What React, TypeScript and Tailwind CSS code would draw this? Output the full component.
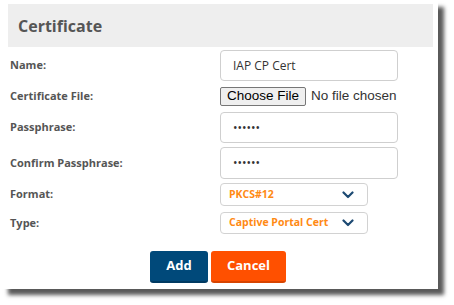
import React from "react";

const label = "w-[210px] shrink-0 text-[11px] font-bold text-[#555]";

function Chevron() {
  return (
    <svg width="12" height="8" viewBox="0 0 12 8" className="shrink-0">
      <path d="M1.5 1.5 L6 6 L10.5 1.5" fill="none" stroke="#1d4a73" strokeWidth="2.2" strokeLinecap="round" strokeLinejoin="round" />
    </svg>
  );
}

function TextField({ value }: { value: string }) {
  return (
    <div className="flex h-full w-[178px] items-center rounded border border-[#cfcfcf] bg-white pl-3 text-[12px] text-[#333]">
      {value}
    </div>
  );
}

function SelectField({ value }: { value: string }) {
  return (
    <div className="flex h-full w-[148px] items-center rounded border border-[#d2d2d2] bg-white pl-2 pr-[13px] text-[10.5px] font-bold text-[#ff8a14]">
      <span>{value}</span>
      <span className="ml-auto">
        <Chevron />
      </span>
    </div>
  );
}

export default function App() {
  return (
    <div className="h-[305px] w-[454px] bg-white pl-[2px] pt-[1px] font-['Open_Sans',sans-serif]">
      <div className="flex h-[288px] w-[436px] flex-col bg-white pl-[6px] pr-[5px] pt-[3px] shadow-[6px_6px_4px_rgba(0,0,0,0.65)]">
        <div className="flex h-[43px] items-center bg-[#eeeeee] pl-[10px] text-[16px] font-bold text-[#555]">
          Certificate
        </div>

        <div className="flex flex-col pl-[2px]">
          <div className="mt-[3px] flex h-[31px] items-center">
            <div className={label}>Name:</div>
            <TextField value="IAP CP Cert" />
          </div>

          <div className="mt-[6px] flex h-[19px] items-center">
            <div className={label}>Certificate File:</div>
            <div className="flex items-center font-['Liberation_Sans',sans-serif] text-[13.5px]">
              <div className="flex h-[19px] w-[86px] items-center justify-center rounded-[2px] border border-[#767676] bg-[#efefef] text-black">
                Choose File
              </div>
              <span className="ml-[5px] text-[#333]">No file chosen</span>
            </div>
          </div>

          <div className="mt-[6px] flex h-[31px] items-center">
            <div className={label}>Passphrase:</div>
            <TextField value="••••••" />
          </div>

          <div className="mt-[4px] flex h-[32px] items-center">
            <div className={label}>Confirm Passphrase:</div>
            <TextField value="••••••" />
          </div>

          <div className="mt-[4px] flex h-[23px] items-center">
            <div className={label}>Format:</div>
            <SelectField value="PKCS#12" />
          </div>

          <div className="mt-[6px] flex h-[22px] items-center">
            <div className={label}>Type:</div>
            <SelectField value="Captive Portal Cert" />
          </div>
        </div>

        <div className="mt-[17px] flex justify-center gap-[3px] pr-[5px]">
          <button className="h-[32px] w-[58px] rounded-[3px] border-b-2 border-[#003a62] bg-[#00497a] text-[13px] font-bold text-white">
            Add
          </button>
          <button className="h-[32px] w-[75px] rounded-[3px] border-b-2 border-[#d84400] bg-[#ff5000] text-[13px] font-bold text-white">
            Cancel
          </button>
        </div>
      </div>
    </div>
  );
}
